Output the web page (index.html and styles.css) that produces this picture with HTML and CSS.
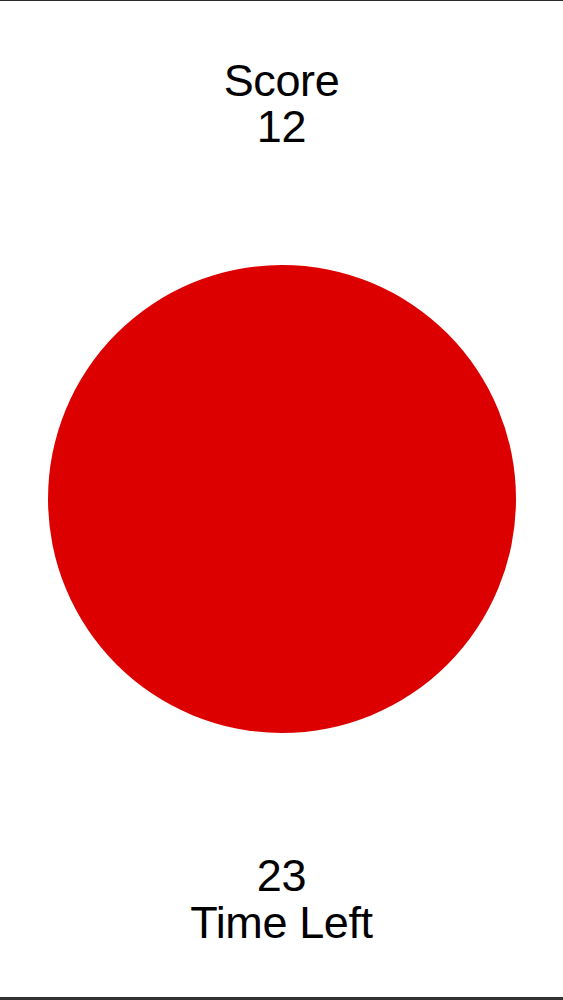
FILE: index.html
```html
<!DOCTYPE html>
<html lang="en">
<head>
<meta charset="utf-8">
<title>Tap Game</title>
<link rel="stylesheet" href="styles.css">
</head>
<body>
<main class="screen">
  <section class="stat stat-top">
    <div class="stat-line">Score</div>
    <div class="stat-line">12</div>
  </section>
  <div class="target"></div>
  <section class="stat stat-bottom">
    <div class="stat-line">23</div>
    <div class="stat-line">Time Left</div>
  </section>
</main>
</body>
</html>
```
FILE: styles.css
```css
html, body {
  margin: 0;
  padding: 0;
  background: #ffffff;
}
.screen {
  box-sizing: border-box;
  width: 563px;
  height: 1000px;
  display: flex;
  flex-direction: column;
  align-items: center;
  border-top: 1px solid #2b2b2b;
  border-bottom: 3px solid #333333;
  padding-top: 57px;
  background: #ffffff;
  font-family: "Liberation Sans", Arial, sans-serif;
  color: #000000;
}
.stat {
  display: flex;
  flex-direction: column;
  align-items: center;
}
.stat-line {
  font-size: 45px;
  line-height: 46px;
  letter-spacing: -0.4px;
  white-space: nowrap;
}
.stat-bottom .stat-line + .stat-line {
  margin-top: 1px;
}
.target {
  margin-top: 115px;
  width: 468px;
  height: 468px;
  border-radius: 50%;
  background: #dd0000;
  flex: none;
}
.stat-bottom {
  margin-top: 120px;
}
```
